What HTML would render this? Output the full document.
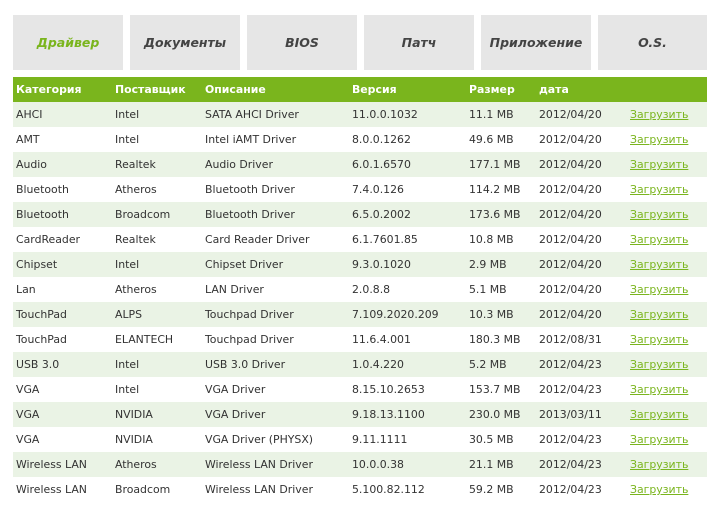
<!DOCTYPE html>
<html><head><meta charset="utf-8"><style>
body{margin:0;background:#fff;width:722px;height:507px;overflow:hidden;font-family:"DejaVu Sans","Liberation Sans",sans-serif;}
.tabs{position:absolute;top:15px;left:13px;}
.tab{position:absolute;top:0;width:110px;height:55px;background:#e6e6e6;display:flex;align-items:center;justify-content:center;font-weight:bold;font-style:italic;font-size:12.5px;color:#444;}
.tab.on{color:#7ab51d;}
table{position:absolute;top:77px;left:13px;width:694px;border-collapse:collapse;font-size:10.9px;color:#333;}
td,th{height:25px;padding:0 0 0 3px;text-align:left;white-space:nowrap;}
th{background:#7ab51d;color:#fff;font-weight:bold;}
tr:nth-child(even) td{background:#eaf3e5;}
a{color:#7ab51d;text-decoration:underline;}
</style></head><body>
<div class="tabs">
<div class="tab on" style="left:0">Драйвер</div>
<div class="tab" style="left:117px">Документы</div>
<div class="tab" style="left:234px">BIOS</div>
<div class="tab" style="left:351px">Патч</div>
<div class="tab" style="left:468px">Приложение</div>
<div class="tab" style="left:585px;width:109px">O.S.</div>
</div>
<table>
<colgroup><col style="width:99px"><col style="width:90px"><col style="width:147px"><col style="width:117px"><col style="width:70px"><col style="width:91px"><col></colgroup>
<tr><th>Категория</th><th>Поставщик</th><th>Описание</th><th>Версия</th><th>Размер</th><th>дата</th><th></th></tr>
<tr><td>AHCI</td><td>Intel</td><td>SATA AHCI Driver</td><td>11.0.0.1032</td><td>11.1 MB</td><td>2012/04/20</td><td><a>Загрузить</a></td></tr>
<tr><td>AMT</td><td>Intel</td><td>Intel iAMT Driver</td><td>8.0.0.1262</td><td>49.6 MB</td><td>2012/04/20</td><td><a>Загрузить</a></td></tr>
<tr><td>Audio</td><td>Realtek</td><td>Audio Driver</td><td>6.0.1.6570</td><td>177.1 MB</td><td>2012/04/20</td><td><a>Загрузить</a></td></tr>
<tr><td>Bluetooth</td><td>Atheros</td><td>Bluetooth Driver</td><td>7.4.0.126</td><td>114.2 MB</td><td>2012/04/20</td><td><a>Загрузить</a></td></tr>
<tr><td>Bluetooth</td><td>Broadcom</td><td>Bluetooth Driver</td><td>6.5.0.2002</td><td>173.6 MB</td><td>2012/04/20</td><td><a>Загрузить</a></td></tr>
<tr><td>CardReader</td><td>Realtek</td><td>Card Reader Driver</td><td>6.1.7601.85</td><td>10.8 MB</td><td>2012/04/20</td><td><a>Загрузить</a></td></tr>
<tr><td>Chipset</td><td>Intel</td><td>Chipset Driver</td><td>9.3.0.1020</td><td>2.9 MB</td><td>2012/04/20</td><td><a>Загрузить</a></td></tr>
<tr><td>Lan</td><td>Atheros</td><td>LAN Driver</td><td>2.0.8.8</td><td>5.1 MB</td><td>2012/04/20</td><td><a>Загрузить</a></td></tr>
<tr><td>TouchPad</td><td>ALPS</td><td>Touchpad Driver</td><td>7.109.2020.209</td><td>10.3 MB</td><td>2012/04/20</td><td><a>Загрузить</a></td></tr>
<tr><td>TouchPad</td><td>ELANTECH</td><td>Touchpad Driver</td><td>11.6.4.001</td><td>180.3 MB</td><td>2012/08/31</td><td><a>Загрузить</a></td></tr>
<tr><td>USB 3.0</td><td>Intel</td><td>USB 3.0 Driver</td><td>1.0.4.220</td><td>5.2 MB</td><td>2012/04/23</td><td><a>Загрузить</a></td></tr>
<tr><td>VGA</td><td>Intel</td><td>VGA Driver</td><td>8.15.10.2653</td><td>153.7 MB</td><td>2012/04/23</td><td><a>Загрузить</a></td></tr>
<tr><td>VGA</td><td>NVIDIA</td><td>VGA Driver</td><td>9.18.13.1100</td><td>230.0 MB</td><td>2013/03/11</td><td><a>Загрузить</a></td></tr>
<tr><td>VGA</td><td>NVIDIA</td><td>VGA Driver (PHYSX)</td><td>9.11.1111</td><td>30.5 MB</td><td>2012/04/23</td><td><a>Загрузить</a></td></tr>
<tr><td>Wireless LAN</td><td>Atheros</td><td>Wireless LAN Driver</td><td>10.0.0.38</td><td>21.1 MB</td><td>2012/04/23</td><td><a>Загрузить</a></td></tr>
<tr><td>Wireless LAN</td><td>Broadcom</td><td>Wireless LAN Driver</td><td>5.100.82.112</td><td>59.2 MB</td><td>2012/04/23</td><td><a>Загрузить</a></td></tr>
</table>
</body></html>
